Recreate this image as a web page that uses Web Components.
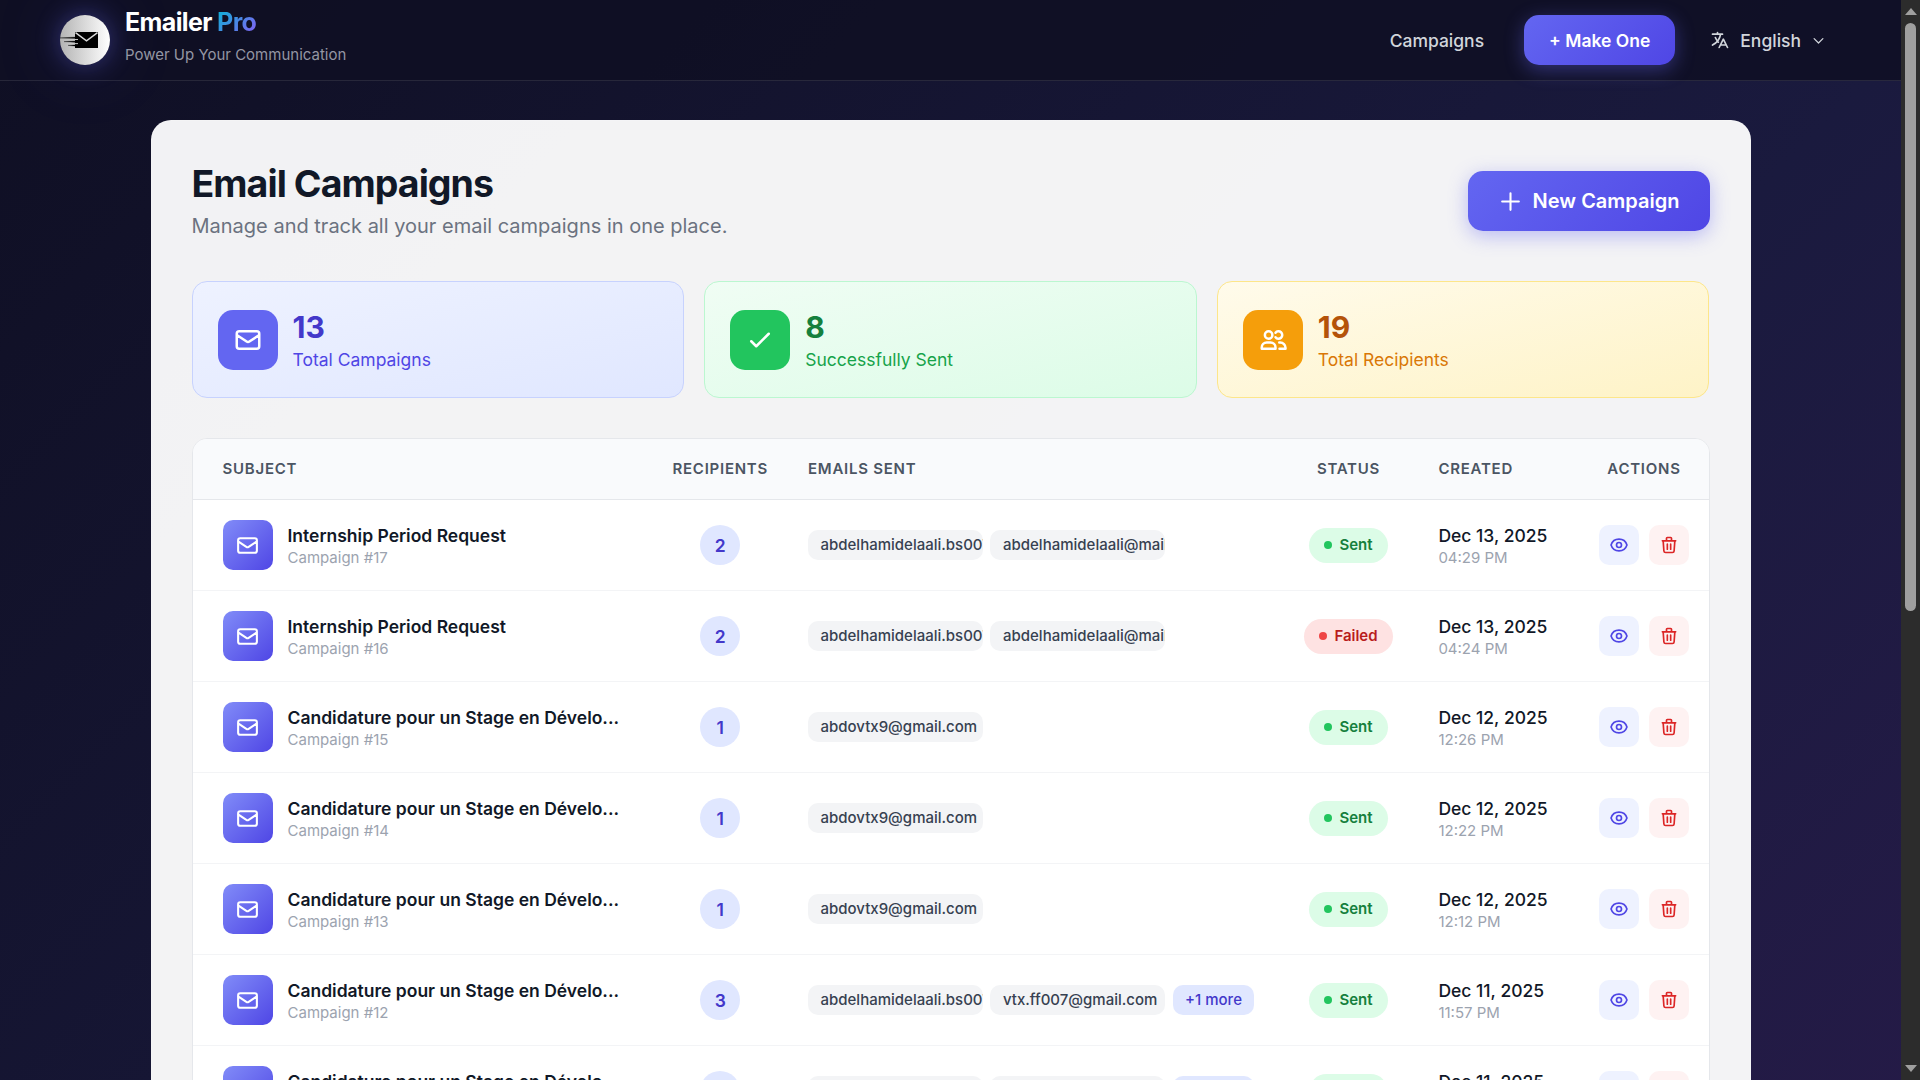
<!DOCTYPE html>
<html lang="en">
<head>
<meta charset="utf-8">
<title>Emailer Pro</title>
<style>
    *{
        box-sizing:border-box;
    }
    body{
        margin:0;
        height:1080px;
        overflow:hidden;
        display:flex;
        font-family:Inter, "Liberation Sans", sans-serif;
        background:#0f0f23;
    }
</style>
</head>
<body>
<email-app></email-app>
<scroll-rail></scroll-rail>

<script>
const ICONS = {
    mail: '<path d="M3 8l7.89 5.26a2 2 0 002.22 0L21 8M5 19h14a2 2 0 002-2V7a2 2 0 00-2-2H5a2 2 0 00-2 2v10a2 2 0 002 2z"/>',
    check: '<path d="M5 13l4 4L19 7"/>',
    users: '<circle cx="8.5" cy="8" r="3"/><path d="M14 6.2a3 3 0 110 3.6"/><path d="M3 18a4 4 0 014-4h3a4 4 0 014 4v1H3z"/><path d="M17 14h.8a4.2 4.2 0 014.2 4.2v.8h-4.8"/>',
    plus: '<path d="M12 4v16m8-8H4"/>',
    eye: '<path d="M15 12a3 3 0 11-6 0 3 3 0 016 0z"/><path d="M2.458 12C3.732 7.943 7.523 5 12 5c4.478 0 8.268 2.943 9.542 7-1.274 4.057-5.064 7-9.542 7-4.477 0-8.268-2.943-9.542-7z"/>',
    trash: '<path d="M19 7l-.867 12.142A2 2 0 0116.138 21H7.862a2 2 0 01-1.995-1.858L5 7m5 4v6m4-6v6m1-10V4a1 1 0 00-1-1h-4a1 1 0 00-1 1v3M4 7h16"/>',
    language: '<path d="M3 5h12M9 3v2m1.048 9.5A18.022 18.022 0 016.412 9m6.088 9h7M11 21l5-10 5 10M12.751 5C11.783 10.77 8.07 15.61 3 18.129"/>',
    down: '<path d="M19 9l-7 7-7-7"/>'
}

const LONG_SUBJECT = "Candidature pour un Stage en Dévelo..."
const BS = "abdelhamidelaali.bs007"

const CAMPAIGNS = [
    { id:17, subject:"Internship Period Request", count:2, emails:[BS, "abdelhamidelaali@mail"], status:"Sent", date:"Dec 13, 2025", time:"04:29 PM" },
    { id:16, subject:"Internship Period Request", count:2, emails:[BS, "abdelhamidelaali@mail"], status:"Failed", date:"Dec 13, 2025", time:"04:24 PM" },
    { id:15, subject:LONG_SUBJECT, count:1, emails:["abdovtx9@gmail.com"], status:"Sent", date:"Dec 12, 2025", time:"12:26 PM" },
    { id:14, subject:LONG_SUBJECT, count:1, emails:["abdovtx9@gmail.com"], status:"Sent", date:"Dec 12, 2025", time:"12:22 PM" },
    { id:13, subject:LONG_SUBJECT, count:1, emails:["abdovtx9@gmail.com"], status:"Sent", date:"Dec 12, 2025", time:"12:12 PM" },
    { id:12, subject:LONG_SUBJECT, count:3, emails:[BS, "vtx.ff007@gmail.com"], more:1, status:"Sent", date:"Dec 11, 2025", time:"11:57 PM" },
    { id:11, subject:LONG_SUBJECT, count:3, emails:[BS, "vtx.ff007@gmail.com"], more:1, status:"Sent", date:"Dec 11, 2025", time:"11:52 PM" }
]

class UiIcon extends HTMLElement{
    constructor(){
        super();
        this.attachShadow({ mode: "open" });
    }
    connectedCallback(){
        const size = this.getAttribute("size") || 20
        const stroke = this.getAttribute("stroke") || 2
        this.shadowRoot.innerHTML = `
        <style>
        :host{
            display:block;
            flex:none;
            width:${size}px;
            height:${size}px;
        }
        svg{
            display:block;
        }
        </style>
        <svg width="${size}" height="${size}" viewBox="0 0 24 24" fill="none" stroke="currentColor" stroke-width="${stroke}" stroke-linecap="round" stroke-linejoin="round">${ICONS[this.getAttribute("name")]}</svg>
        `
    }
}
customElements.define("ui-icon", UiIcon)

class BrandLogo extends HTMLElement{
    constructor(){
        super();
        this.attachShadow({ mode: "open" });
        this.shadowRoot.innerHTML = `
        <style>
        :host{
            display:flex;
            align-items:center;
            gap:15px;
            font-weight:400;
        }
        .round{
            width:50px;
            height:50px;
            border-radius:50%;
            background:linear-gradient(90deg, #b4b4b4, #ffffff);
            box-shadow:0 0 25px rgba(99, 102, 241, .4), 0 0 75px rgba(99, 102, 241, .2);
        }
        svg{
            display:block;
        }
        .name{
            font-size:25px;
            font-weight:700;
            line-height:32px;
            letter-spacing:-.625px;
            color:white;
        }
        .name span{
            background:linear-gradient(135deg, #06b6d4, #8b5cf6);
            -webkit-background-clip:text;
            background-clip:text;
            color:transparent;
        }
        .tag{
            font-size:15px;
            line-height:32px;
            margin:1px 0 4px;
            color:#9496a3;
        }
        </style>
        <div class="round">
            <svg width="50" height="50" viewBox="0 0 50 50">
                <path d="M15 17h23v16H15z" fill="#000"/>
                <path d="M15.5 17.6l11 8.2 11-8.2" fill="none" stroke="#d9d9d9" stroke-width="1.4"/>
                <path d="M0 22.9l17-.9v1.4zM4 26.6l13-.7v1.5zM8 30.4l9-.7v1.5z" fill="#000" stroke="#000" stroke-width=".3"/>
                <path d="M14 24.5h4M14 28.6h4" stroke="#c2c2c2" stroke-width="1"/>
            </svg>
        </div>
        <div>
            <div class="name">Emailer <span>Pro</span></div>
            <div class="tag">Power Up Your Communication</div>
        </div>
        `
    }
}
customElements.define("brand-logo", BrandLogo)

class TopBar extends HTMLElement{
    constructor(){
        super();
        this.attachShadow({ mode: "open" });
        this.shadowRoot.innerHTML = `
        <style>
        :host{
            display:flex;
            justify-content:space-between;
            align-items:center;
            box-sizing:border-box;
            height:81px;
            padding:0 60px;
            background:rgba(15, 15, 35, .85);
            border-bottom:1px solid rgba(255, 255, 255, .1);
            color:#d1d5db;
            font-size:17.5px;
            font-weight:500;
        }
        nav{
            display:flex;
            align-items:center;
        }
        .make{
            box-sizing:border-box;
            margin:0 20px 0 40px;
            height:50px;
            line-height:50px;
            padding:1px 25px 0;
            border-radius:15px;
            font-weight:600;
            color:white;
            background:linear-gradient(135deg, #6366f1, #4f46e5);
            box-shadow:0 5px 19px rgba(99, 102, 241, .4);
        }
        .lang{
            display:flex;
            align-items:center;
            gap:10px;
            padding:0 15px;
        }
        </style>
        <brand-logo></brand-logo>
        <nav>
            <span>Campaigns</span>
            <div class="make">+ Make One</div>
            <div class="lang">
                <ui-icon name="language" size="20" stroke="2"></ui-icon>
                <span>English</span>
                <ui-icon name="down" size="15"></ui-icon>
            </div>
        </nav>
        `
    }
}
customElements.define("top-bar", TopBar)

class StatCard extends HTMLElement{
    constructor(){
        super();
        this.attachShadow({ mode: "open" });
        this.shadowRoot.innerHTML = `
        <style>
        :host{
            --from:#eef2ff;
            --to:#e0e7ff;
            --line:#c7d2fe;
            --icon:#6366f1;
            --number:#4338ca;
            --label:#4f46e5;
            display:flex;
            align-items:center;
            gap:15px;
            box-sizing:border-box;
            height:117px;
            padding:0 25px;
            border:1px solid var(--line);
            border-radius:15px;
            background:linear-gradient(to bottom right, var(--from), var(--to));
        }
        :host([tone="green"]){
            --from:#f0fdf4;
            --to:#dcfce7;
            --line:#bbf7d0;
            --icon:#22c55e;
            --number:#15803d;
            --label:#16a34a;
        }
        :host([tone="amber"]){
            --from:#fffbeb;
            --to:#fef3c7;
            --line:#fde68a;
            --icon:#f59e0b;
            --number:#b45309;
            --label:#d97706;
        }
        .icon{
            display:flex;
            align-items:center;
            justify-content:center;
            width:60px;
            height:60px;
            border-radius:15px;
            background:var(--icon);
            color:white;
        }
        .number{
            margin-top:2px;
            font-size:30px;
            line-height:39px;
            font-weight:700;
            color:var(--number);
        }
        .label{
            font-size:17.5px;
            line-height:26px;
            color:var(--label);
        }
        </style>
        <div class="icon"><ui-icon name="${this.getAttribute("icon")}" size="30"></ui-icon></div>
        <div>
            <div class="number"><slot name="number"></slot></div>
            <div class="label"><slot></slot></div>
        </div>
        `
    }
}
customElements.define("stat-card", StatCard)

class StatusBadge extends HTMLElement{
    constructor(){
        super();
        this.attachShadow({ mode: "open" });
        this.shadowRoot.innerHTML = `
        <style>
        :host{
            --dot:#22c55e;
            display:inline-flex;
            align-items:center;
            gap:7px;
            box-sizing:border-box;
            height:35px;
            padding:0 15px 1px;
            border-radius:18px;
            font-size:15px;
            font-weight:600;
            background:#dcfce7;
            color:#15803d;
        }
        :host([failed]){
            --dot:#ef4444;
            background:#fee2e2;
            color:#b91c1c;
        }
        i{
            width:8px;
            height:8px;
            margin-top:1px;
            border-radius:50%;
            background:var(--dot);
        }
        </style>
        <i></i><slot></slot>
        `
    }
}
customElements.define("status-badge", StatusBadge)

class CampaignRow extends HTMLElement{
    constructor(){
        super();
        this.attachShadow({ mode: "open" });
    }
    set data(c){
        const tags = c.emails.map(e => `<span class="tag">${e}</span>`).join("")
        const more = c.more ? `<span class="tag more">+${c.more} more</span>` : ""
        this.shadowRoot.innerHTML = `
        <style>
        :host{
            display:grid;
            grid-template-columns:var(--columns);
            align-items:center;
            box-sizing:border-box;
            height:91px;
            border-bottom:1px solid #f3f4f6;
            background:white;
        }
        .subject{
            display:flex;
            align-items:center;
            gap:15px;
            padding-left:30px;
        }
        .icon{
            display:flex;
            align-items:center;
            justify-content:center;
            width:50px;
            height:50px;
            border-radius:10px;
            background:linear-gradient(135deg, #818cf8, #4f46e5);
            color:white;
        }
        .main{
            font-size:17.5px;
            line-height:21px;
            margin:1px 0 3px;
            color:#111827;
            white-space:nowrap;
        }
        .subject .main{
            font-weight:600;
        }
        .date .main{
            font-weight:500;
        }
        .small{
            font-size:15px;
            line-height:18px;
            margin-bottom:-1px;
            color:#9ca3af;
        }
        .center{
            display:flex;
            justify-content:center;
            gap:10px;
        }
        .count{
            box-sizing:border-box;
            width:40px;
            height:40px;
            line-height:40px;
            padding-top:1px;
            border-radius:50%;
            text-align:center;
            font-size:17.5px;
            font-weight:600;
            background:#e0e7ff;
            color:#4338ca;
        }
        .emails{
            display:flex;
            gap:7px;
            padding-left:19.5px;
        }
        .tag{
            box-sizing:border-box;
            width:175px;
            height:30px;
            line-height:30px;
            padding-left:13px;
            border-radius:10px;
            overflow:hidden;
            white-space:nowrap;
            font-size:15px;
            font-weight:500;
            background:#f3f4f6;
            color:#374151;
        }
        .tag + .tag{
            padding-left:13.5px;
        }
        .tag.more{
            width:auto;
            margin-left:1px;
            padding:0 12.5px;
            background:#e0e7ff;
            color:#4338ca;
        }
        .date{
            padding-left:19.4px;
        }
        .act{
            display:flex;
            align-items:center;
            justify-content:center;
            width:40px;
            height:40px;
            border-radius:10px;
            background:#eef2ff;
            color:#4f46e5;
        }
        .del{
            background:#fef2f2;
            color:#dc2626;
        }
        </style>
        <div class="subject">
            <div class="icon"><ui-icon name="mail" size="25"></ui-icon></div>
            <div>
                <div class="main">${c.subject}</div>
                <div class="small">Campaign #${c.id}</div>
            </div>
        </div>
        <div class="center"><div class="count">${c.count}</div></div>
        <div class="emails">${tags}${more}</div>
        <div class="center"><status-badge ${c.status == "Failed" ? "failed" : ""}>${c.status}</status-badge></div>
        <div class="date">
            <div class="main">${c.date}</div>
            <div class="small">${c.time}</div>
        </div>
        <div class="center">
            <div class="act"><ui-icon name="eye" size="20"></ui-icon></div>
            <div class="act del"><ui-icon name="trash" size="20"></ui-icon></div>
        </div>
        `
    }
}
customElements.define("campaign-row", CampaignRow)

class CampaignTable extends HTMLElement{
    constructor(){
        super();
        this.attachShadow({ mode: "open" });
        this.shadowRoot.innerHTML = `
        <style>
        :host{
            --columns:460px 135.5px 490px 141px 160.5px 129px;
            display:block;
            border:1px solid #e5e7eb;
            border-radius:15px;
            overflow:hidden;
            background:white;
        }
        .head{
            display:grid;
            grid-template-columns:var(--columns);
            align-items:center;
            box-sizing:border-box;
            height:61px;
            padding-bottom:2px;
            border-bottom:1px solid #e5e7eb;
            background:#f9fafc;
            font-size:15px;
            font-weight:600;
            letter-spacing:.75px;
            color:#4b5563;
        }
        .head span{
            padding:0 20px;
        }
        .head span:first-child{
            padding-left:30px;
        }
        .head .mid{
            text-align:center;
        }
        .head .date{
            padding-left:19.4px;
        }
        </style>
        <div class="head">
            <span>SUBJECT</span>
            <span class="mid">RECIPIENTS</span>
            <span>EMAILS SENT</span>
            <span class="mid">STATUS</span>
            <span class="date">CREATED</span>
            <span class="mid">ACTIONS</span>
        </div>
        `
    }
    connectedCallback(){
        CAMPAIGNS.forEach(c => {
            const row = document.createElement("campaign-row")
            row.data = c
            this.shadowRoot.appendChild(row)
        })
    }
}
customElements.define("campaign-table", CampaignTable)

class EmailApp extends HTMLElement{
    constructor(){
        super();
        this.attachShadow({ mode: "open" });
        this.shadowRoot.innerHTML = `
        <style>
        :host{
            display:block;
            flex:1;
            height:2000px;
            background:linear-gradient(135deg, #0f0f23 0%, #1a1a3e 50%, #2d1b4e 100%);
        }
        main{
            box-sizing:border-box;
            width:1600px;
            margin:39px auto 0;
            padding:40px;
            border:1px solid rgba(255, 255, 255, .2);
            border-radius:20px;
            background:rgba(255, 255, 255, .95);
        }
        header{
            display:flex;
            justify-content:space-between;
            align-items:center;
            margin-bottom:40px;
        }
        h1{
            margin:0 0 5px;
            font-size:37.5px;
            line-height:45px;
            font-weight:700;
            letter-spacing:-.94px;
            color:#111827;
        }
        p{
            margin:0;
            font-size:20px;
            line-height:30px;
            color:#6b7280;
        }
        .new{
            display:flex;
            align-items:center;
            gap:10px;
            height:60px;
            padding:0 30px;
            border-radius:15px;
            font-size:20px;
            font-weight:600;
            color:white;
            background:linear-gradient(135deg, #6366f1, #4f46e5);
            box-shadow:0 5px 19px rgba(99, 102, 241, .4);
        }
        .stats{
            display:grid;
            grid-template-columns:repeat(3, 1fr);
            gap:20px;
            margin-bottom:40px;
        }
        </style>
        <top-bar></top-bar>
        <main>
            <header>
                <div>
                    <h1>Email Campaigns</h1>
                    <p>Manage and track all your email campaigns in one place.</p>
                </div>
                <div class="new"><ui-icon name="plus" size="25"></ui-icon>New Campaign</div>
            </header>
            <div class="stats">
                <stat-card icon="mail"><span slot="number">13</span>Total Campaigns</stat-card>
                <stat-card icon="check" tone="green"><span slot="number">8</span>Successfully Sent</stat-card>
                <stat-card icon="users" tone="amber"><span slot="number">19</span>Total Recipients</stat-card>
            </div>
            <campaign-table></campaign-table>
        </main>
        `
    }
}
customElements.define("email-app", EmailApp)

class ScrollRail extends HTMLElement{
    constructor(){
        super();
        this.attachShadow({ mode: "open" });
        this.shadowRoot.innerHTML = `
        <style>
        :host{
            display:flex;
            flex-direction:column;
            align-items:center;
            box-sizing:border-box;
            flex:none;
            width:19px;
            height:1080px;
            padding:8px 0;
            background:#2c2c2c;
        }
        .up, .down{
            border:6.5px solid transparent;
            border-top:0;
            border-bottom:7px solid #9f9f9f;
        }
        .down{
            border-bottom:0;
            border-top:7px solid #9f9f9f;
            margin-top:auto;
        }
        .thumb{
            width:11px;
            height:588px;
            margin-top:8px;
            border-radius:6px;
            background:#9f9f9f;
        }
        </style>
        <div class="up"></div>
        <div class="thumb"></div>
        <div class="down"></div>
        `
    }
}
customElements.define("scroll-rail", ScrollRail)
</script>
</body>
</html>
